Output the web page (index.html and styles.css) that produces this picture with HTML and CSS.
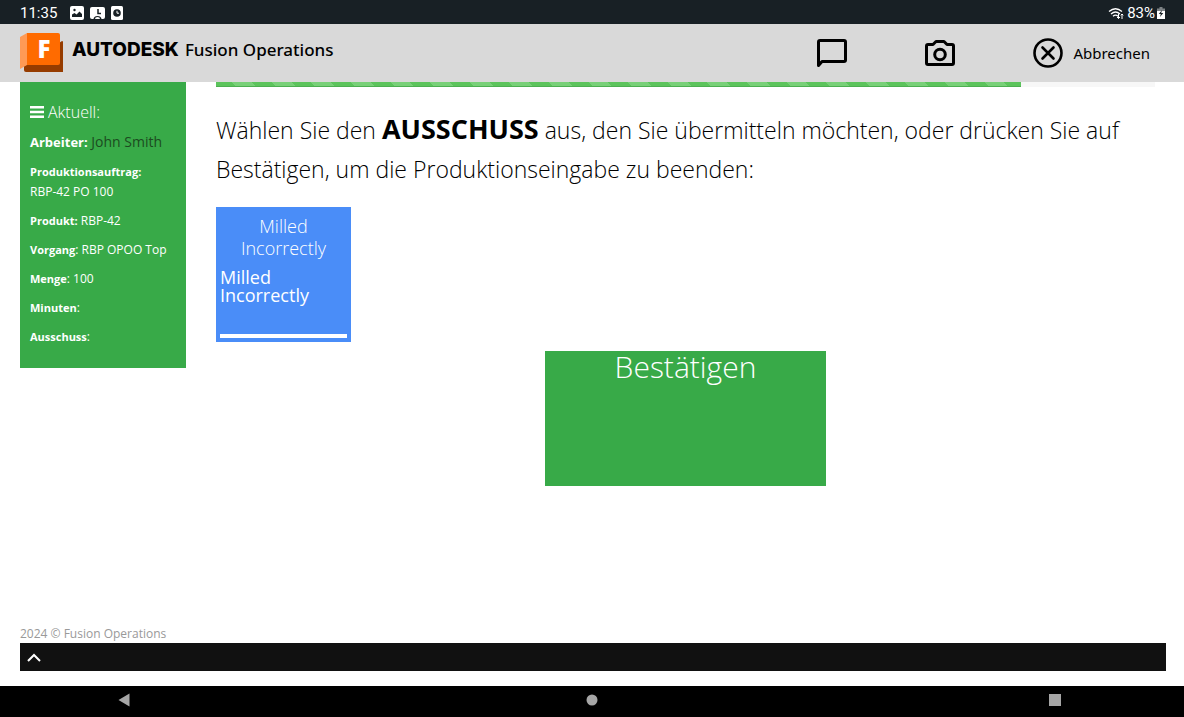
FILE: index.html
```html
<!DOCTYPE html>
<html lang="de">
<head>
<meta charset="utf-8">
<meta name="viewport" content="width=device-width, initial-scale=1">
<title>Fusion Operations</title>
<link rel="stylesheet" href="styles.css">
</head>
<body>
<div class="status-bar">
  <div class="status-left">
    <span>11:35</span>
    <svg class="status-icon" width="14" height="14" viewBox="0 0 14 14"><rect x="0" y="0" width="14" height="14" rx="2" fill="#fff"/><path d="M2 11V8.500L4.500 7l2 1.500L9.500 5.500 12 8v3z" fill="#182025"/><circle cx="4.500" cy="4" r="1.200" fill="#182025"/></svg>
    <svg class="status-icon" width="15" height="14" viewBox="0 0 15 14"><rect x="0" y="1" width="15" height="12" rx="2" fill="#fff"/><path d="M8 3v4.500h3" fill="none" stroke="#182025" stroke-width="1.500"/><path d="M3.500 13.500a4 3.600 0 0 1 8 0z" fill="#182025"/><path d="M5 13a2.500 2 0 0 1 5 0z" fill="#fff"/></svg>
    <svg class="status-icon" width="12" height="14" viewBox="0 0 12 14"><rect x="0" y="0" width="12" height="14" rx="1.500" fill="#fff"/><circle cx="6" cy="7" r="3.800" fill="#182025"/><path d="M6 4.800V7.200h2" fill="none" stroke="#fff" stroke-width="1"/></svg>
  </div>
  <div class="status-right">
    <svg width="17" height="13" viewBox="0 0 17 13" fill="none" stroke="#fff" stroke-width="1.300"><path d="M1 4.500Q7.500-1 14 4.500M3 7Q7.500 3 12 7M5 9.300Q7.500 7 10 9.300"/><path d="M10.500 7v4.500M9 10l1.500 1.500L12 10M14 12V7M12.700 8.300L14 7l1.300 1.300" stroke-width="1"/></svg>
    <span>83%</span>
    <svg width="8" height="12" viewBox="0 0 8 12"><path d="M2.500 0h3v1.500H8V4H0V1.500h2.500z" fill="#7d8285"/><path d="M0 4h8v8H0z" fill="#fff"/><path d="M5 3L1.800 7h2L3 10l3.300-4H4.200z" fill="#182025"/></svg>
  </div>
</div>

<header class="app-header">
  <div class="brand">
    <svg class="brand-logo" width="44" height="40" viewBox="0 0 44 40" aria-hidden="true">
      <path d="M4 33l38-25q1 0 1 1v30H6q-2 0-2-2z" fill="#963c00"/>
      <path d="M0 4L7 0v32l-7 4z" fill="#ff9a55"/>
      <path d="M7 0h31q2 0 2 2v28q0 2-2 2H7z" fill="#ff6b00"/>
      <text class="logo-letter" x="24" y="25" text-anchor="middle">F</text>
    </svg>
    <span class="brand-company">AUTODESK</span>
    <span class="brand-product">Fusion Operations</span>
  </div>
  <nav class="header-actions">
    <button class="icon-button" type="button" aria-label="Nachricht">
      <svg width="32" height="30" viewBox="0 0 32 30" fill="none" stroke="#000" stroke-width="3" stroke-linejoin="round"><path d="M4 2.500h24q1.500 0 1.500 1.500v18q0 1.500-1.500 1.500H6l-3.500 4V4q0-1.500 1.500-1.500z"/></svg>
    </button>
    <button class="icon-button" type="button" aria-label="Kamera">
      <svg width="32" height="28" viewBox="0 0 32 28" fill="none" stroke="#000" stroke-width="3" stroke-linejoin="round"><path d="M4 5.500h5l3-3h8l3 3h5q1.500 0 1.500 1.500v17q0 1.500-1.500 1.500H4q-1.500 0-1.500-1.500V7q0-1.500 1.500-1.500z"/><circle cx="16" cy="15.500" r="5.300"/></svg>
    </button>
    <button class="icon-button" type="button">
      <svg width="32" height="32" viewBox="0 0 32 32" fill="none" stroke="#000" stroke-width="2.600" stroke-linecap="round"><circle cx="16" cy="16" r="13.500"/><path d="M10.500 10.500l11 11M21.500 10.500l-11 11"/></svg>
      <span>Abbrechen</span>
    </button>
  </nav>
</header>

<main class="page">
  <aside class="current-panel">
    <h2 class="panel-title">
      <svg width="14" height="12" viewBox="0 0 14 12" fill="#fff"><path d="M0 0h14v2.500H0zM0 4.700h14v2.500H0zM0 9.500h14V12H0z"/></svg>
      Aktuell:
    </h2>
    <p class="worker"><b>Arbeiter:</b> <span class="worker-name">John Smith</span></p>
    <p><b>Produktionsauftrag:</b><br>RBP-42 PO 100</p>
    <p><b>Produkt:</b> RBP-42</p>
    <p><b>Vorgang</b>: RBP OPOO Top</p>
    <p><b>Menge</b>: 100</p>
    <p><b>Minuten</b>:</p>
    <p><b>Ausschuss</b>:</p>
  </aside>

  <section class="content">
    <div class="progress"><div class="progress-bar" style="width: 85.7%"></div></div>
    <h1 class="prompt">Wählen Sie den <strong>AUSSCHUSS</strong> aus, den Sie übermitteln möchten, oder drücken Sie auf Bestätigen, um die Produktionseingabe zu beenden:</h1>
    <button class="scrap-tile" type="button">
      <span class="tile-title">Milled Incorrectly</span>
      <span class="tile-text">Milled Incorrectly</span>
      <span class="tile-line"></span>
    </button>
    <button class="confirm-tile" type="button">Bestätigen</button>
  </section>
</main>

<footer class="page-footer">
  <div class="copyright">2024 © Fusion Operations</div>
  <div class="drawer">
    <button class="drawer-toggle" type="button" aria-label="Öffnen">
      <svg width="14" height="9" viewBox="0 0 14 9" fill="none" stroke="#fff" stroke-width="2"><path d="M1 8l6-6 6 6"/></svg>
    </button>
  </div>
</footer>

<nav class="system-nav">
  <button class="system-button back" type="button" aria-label="Zurück"><svg width="12" height="14" viewBox="0 0 12 14"><path d="M11.500.500v13L.500 7z" fill="#a6a6a6"/></svg></button>
  <button class="system-button" type="button" aria-label="Startseite"><svg width="12" height="12" viewBox="0 0 12 12"><circle cx="6" cy="6" r="5.500" fill="#a6a6a6"/></svg></button>
  <button class="system-button recent" type="button" aria-label="Übersicht"><svg width="12" height="12" viewBox="0 0 12 12"><path d="M0 0h12v12H0z" fill="#a6a6a6"/></svg></button>
</nav>
</body>
</html>
```

FILE: styles.css
```css
* {
  box-sizing: border-box;
}

body {
  margin: 0;
  min-height: 100vh;
  display: flex;
  flex-direction: column;
  background: #fff;
  color: #000;
  font-family: "Open Sans", sans-serif;
}

button {
  padding: 0;
  border: 0;
  background: none;
  color: inherit;
  font-family: inherit;
  cursor: pointer;
}

svg {
  display: block;
  flex: none;
}

.status-bar {
  display: flex;
  justify-content: space-between;
  align-items: center;
  padding: 2px 19px 0 20px;
  background: #182025;
  color: #fff;
  font-family: Roboto, sans-serif;
  font-size: 15px;
  line-height: 22px;
}

.status-left {
  display: flex;
  align-items: center;
  gap: 6px;
}

.status-left span {
  margin-right: 7px;
}

.status-right {
  display: flex;
  align-items: center;
  gap: 2px;
}

.app-header {
  display: flex;
  justify-content: space-between;
  align-items: center;
  padding: 9px 34px 9px 20px;
  background: #d9d9d9;
}

.brand {
  display: flex;
  align-items: center;
}

.logo-letter {
  fill: #fff;
  font-family: "Open Sans", sans-serif;
  font-size: 24px;
  font-weight: 800;
}

.brand-company {
  margin: 0 6px 6px 8px;
  font-family: Inter, sans-serif;
  font-size: 19px;
  font-weight: 800;
  line-height: 24px;
}

.brand-product {
  margin-bottom: 6px;
  font-family: "Noto Sans", sans-serif;
  font-size: 17px;
  font-weight: 500;
  line-height: 24px;
}

.header-actions {
  display: flex;
  align-items: center;
  gap: 76px;
}

.icon-button {
  display: flex;
  align-items: center;
  gap: 9px;
  font-family: "Noto Sans", sans-serif;
  font-size: 15px;
  line-height: 20px;
}

.page {
  flex: 1;
  display: flex;
  align-items: flex-start;
  gap: 30px;
  padding: 0 29px 0 20px;
}

.current-panel {
  flex: none;
  display: flex;
  flex-direction: column;
  gap: 9px;
  width: 166px;
  padding: 20px 10px 21px;
  background: #38aa48;
  color: #fff;
  font-size: 12px;
  line-height: 20px;
}

.current-panel p {
  margin: 0;
}

.current-panel b {
  font-size: 11px;
}

.panel-title {
  display: flex;
  align-items: center;
  gap: 4px;
  margin: 0;
  font-size: 16px;
  font-weight: 300;
  line-height: 20px;
}

.current-panel .worker {
  font-size: 14px;
  line-height: 22px;
}

.current-panel .worker b {
  font-size: 13px;
}

.worker-name {
  color: #1c4a20;
}

.content {
  flex: 1;
  display: flex;
  flex-direction: column;
  align-items: flex-start;
}

.progress {
  width: 100%;
  background: #f7f7f7;
}

.progress-bar {
  height: 5px;
  border-bottom: 1px solid #4caf50;
  background: repeating-linear-gradient(45deg, #5cc45c 0 14px, #78d078 14px 28px);
}

.prompt {
  margin: 24px 0 18px;
  font-size: 23px;
  font-weight: 300;
  line-height: 39px;
}

.prompt strong {
  font-size: 27px;
  font-weight: 700;
  line-height: 30px;
}

.scrap-tile {
  display: flex;
  flex-direction: column;
  width: 135px;
  height: 135px;
  padding: 8px 4px 4px;
  background: #4a8df8;
  color: #fff;
}

.tile-title {
  padding: 0 18px;
  font-size: 18px;
  font-weight: 300;
  line-height: 22px;
  text-align: center;
}

.tile-text {
  margin-top: 9px;
  font-size: 18px;
  line-height: 18px;
  text-align: left;
}

.tile-line {
  height: 4px;
  margin-top: auto;
  background: #fff;
}

.confirm-tile {
  display: flex;
  align-self: center;
  justify-content: center;
  align-items: flex-start;
  width: 281px;
  height: 135px;
  margin-top: 9px;
  background: #38aa48;
  color: #fff;
  font-size: 30px;
  font-weight: 300;
  line-height: 32px;
}

.page-footer {
  padding: 0 18px 15px 20px;
}

.copyright {
  color: #999;
  font-size: 12px;
  line-height: 18px;
}

.drawer {
  padding: 10px 7px 9px;
  background: #111;
}

.drawer-toggle {
  display: block;
}

.system-nav {
  display: grid;
  grid-template-columns: 1fr auto 1fr;
  padding: 6px 0 9px;
  background: #000;
}

.system-button {
  display: flex;
  align-items: center;
  height: 16px;
}

.back {
  justify-self: start;
  margin-left: 118px;
}

.recent {
  justify-self: end;
  margin-right: 123px;
}
```
